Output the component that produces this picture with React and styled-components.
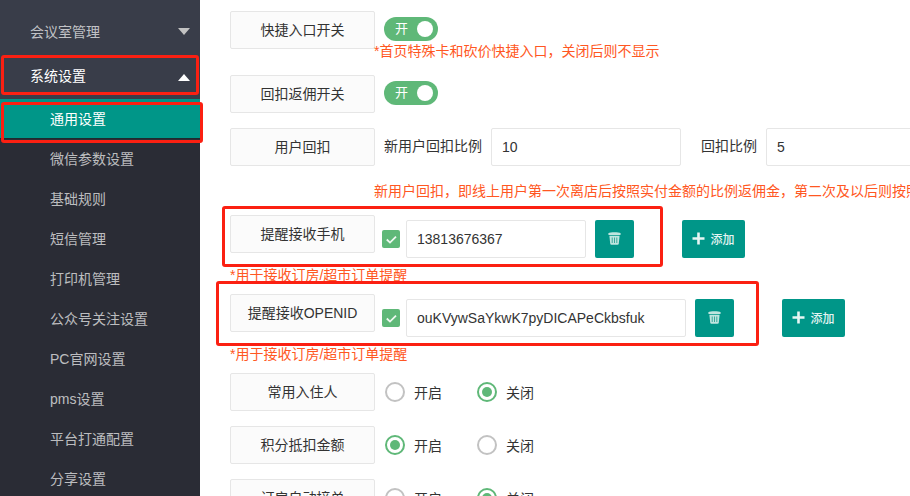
import React from 'react';
import styled, { createGlobalStyle } from 'styled-components';

const Global = createGlobalStyle`
  html, body { margin: 0; padding: 0; height: 496px; overflow: hidden; background: #fff; }
  body { font-family: "Liberation Sans", "Noto Sans CJK SC", sans-serif; font-size: 14px; color: #333; }
`;
const Page = styled.div`display: flex; width: 910px; height: 496px; overflow: hidden; position: relative;`;
const Sidebar = styled.nav`width: 200px; flex: none; background: #393d49; padding-top: 9px; box-sizing: border-box;`;
const TopItem = styled.div`
  height: 45px; display: flex; align-items: center; justify-content: space-between;
  padding: 0 10px 0 30px; color: ${p => (p.$open ? '#fff' : 'rgba(255,255,255,.7)')};
`;
const TopText = styled.span`margin-bottom: ${p => (p.$open ? 3 : 2)}px;`;
const Arrow = styled.span`
  width: 0; height: 0; border-left: 6px solid transparent; border-right: 6px solid transparent;
  ${p => (p.$up ? 'border-bottom: 7px solid #fff; margin-top: 1px;' : 'border-top: 7px solid #c2c2c2;')}
`;
const SubList = styled.div`background: #2a2c35; height: 397px;`;
const SubItem = styled.div`
  height: 40px; line-height: 40px; padding-left: 50px; box-sizing: border-box;
  color: ${p => (p.$active ? '#fff' : 'rgba(255,255,255,.7)')};
  background: ${p => (p.$active ? '#009688' : 'transparent')};
  ${p => p.$active && 'border-bottom: 1px solid #1f2a2e;'}
`;
const Main = styled.main`flex: 1; min-width: 0; padding: 11px 0 0 30px; display: flex; flex-direction: column;`;
const Row = styled.div`display: flex; align-items: flex-start; height: 38px; flex: none; margin-bottom: ${p => p.$mb || 0}px;`;
const Label = styled.div`
  width: 145px; height: 38px; flex: none; box-sizing: border-box; display: flex; align-items: center; justify-content: center;
  background: #fbfbfb; border: 1px solid #e6e6e6; border-radius: 2px; color: #333; padding-bottom: 2px;
`;
const Toggle = styled.div`
  margin: 6px 0 0 9px; width: 54px; height: 24px; border-radius: 12px; background: #5fb878; color: #fff;
  font-size: 13px; display: flex; align-items: center; justify-content: space-between; padding: 0 5px 0 11px; box-sizing: border-box;
`;
const ToggleText = styled.span`margin-bottom: 3px;`;
const Knob = styled.span`width: 16px; height: 16px; border-radius: 50%; background: #fff;`;
const Hint = styled.div`
  color: #ff5722; line-height: 20px; height: 20px; white-space: nowrap; flex: none;
  margin: ${p => p.$mt}px 0 ${p => p.$mb}px ${p => p.$ml}px;
`;
const Text = styled.span`line-height: 36px; margin-left: ${p => p.$ml}px; flex: none; color: #333;`;
const Input = styled.div`
  width: ${p => p.$w}px; height: 38px; box-sizing: border-box; flex: none; border: 1px solid #e6e6e6; border-radius: 2px;
  background: #fff; color: #333; line-height: 36px; padding-left: 10px; margin-left: ${p => p.$ml}px;
  margin-top: ${p => p.$mt || 0}px; white-space: nowrap;
`;
const Check = styled.span`
  width: 18px; height: 18px; flex: none; margin: 15px 0 0 7px; background: #5fb878; border-radius: 2px;
  display: flex; align-items: center; justify-content: center;
`;
const TealBtn = styled.div`
  height: 38px; flex: none; margin-top: 5px; margin-left: ${p => p.$ml}px; width: ${p => p.$w}px;
  background: #009688; border-radius: 2px; color: #e4f4f2; font-size: 12px; font-weight: 500; padding-bottom: 1px; box-sizing: border-box;
  display: flex; align-items: center; justify-content: center; gap: 5px;
`;
const RadioWrap = styled.div`
  display: flex; align-items: center; height: 38px; flex: none; margin-left: ${p => p.$ml}px; gap: 9px; color: #333;
`;
const Circle = styled.span`
  width: 20px; height: 20px; box-sizing: border-box; border-radius: 50%;
  border: 2px solid ${p => (p.$on ? '#5fb878' : '#c2c2c2')}; display: flex; align-items: center; justify-content: center;
  &::after { content: ''; width: 10px; height: 10px; border-radius: 50%; background: ${p => (p.$on ? '#5fb878' : 'transparent')}; }
`;
const Mark = styled.div`
  position: absolute; box-sizing: border-box; border: 3px solid #fb2012; border-radius: 3px; pointer-events: none;
  left: ${p => p.$x}px; top: ${p => p.$y}px; width: ${p => p.$w}px; height: ${p => p.$h}px;
`;

const Trash = () => (
  <svg width="13" height="13" viewBox="0 0 13 13" fill="#bfe5df">
    <path d="M0.2 1.4 C2.5 0 10.5 0 12.8 1.4 L12.4 3 H0.6 Z" />
    <path d="M1.4 3.8 H11.6 L10.8 11.6 C10.7 12.4 10.3 12.8 9.6 12.8 H3.4 C2.7 12.8 2.3 12.4 2.2 11.6 Z" />
    <path d="M3.7 5.4 H4.7 V11 H3.7 Z M6 5.4 H7 V11 H6 Z M8.3 5.4 H9.3 V11 H8.3 Z" fill="#3aa99b" />
  </svg>
);
const Plus = () => (
  <svg width="13" height="13" viewBox="0 0 13 13" fill="#e8f6f4"><path d="M5.2 0.5 H7.8 V5.2 H12.5 V7.8 H7.8 V12.5 H5.2 V7.8 H0.5 V5.2 H5.2 Z" /></svg>
);
const Tick = () => (
  <svg width="13" height="13" viewBox="0 0 13 13" fill="none" stroke="#eef8f1" strokeWidth="1.8"><path d="M1.8 6.5 L5 9.6 L11 3.6" /></svg>
);
const Radio = ({ on, ml, children }) => (
  <RadioWrap $ml={ml}><Circle $on={on} /><span>{children}</span></RadioWrap>
);
const subs = ['微信参数设置', '基础规则', '短信管理', '打印机管理', '公众号关注设置', 'PC官网设置', 'pms设置', '平台打通配置', '分享设置'];

export default function App() {
  return (
    <Page>
      <Global />
      <Sidebar>
        <TopItem><TopText>会议室管理</TopText><Arrow /></TopItem>
        <TopItem $open><TopText $open>系统设置</TopText><Arrow $up /></TopItem>
        <SubList>
          <SubItem $active>通用设置</SubItem>
          {subs.map(s => <SubItem key={s}>{s}</SubItem>)}
        </SubList>
      </Sidebar>
      <Main>
        <Row><Label>快捷入口开关</Label><Toggle><ToggleText>开</ToggleText><Knob /></Toggle></Row>
        <Hint $mt={-8} $mb={14} $ml={144}>*首页特殊卡和砍价快捷入口，关闭后则不显示</Hint>
        <Row $mb={15}><Label>回扣返佣开关</Label><Toggle><ToggleText>开</ToggleText><Knob /></Toggle></Row>
        <Row>
          <Label>用户回扣</Label>
          <Text $ml={9}>新用户回扣比例</Text><Input $w={190} $ml={9}>10</Input>
          <Text $ml={20}>回扣比例</Text><Input $w={190} $ml={9}>5</Input>
        </Row>
        <Hint $mt={15} $mb={14} $ml={144}>新用户回扣，即线上用户第一次离店后按照实付金额的比例返佣金，第二次及以后则按照回扣比例返佣金</Hint>
        <Row>
          <Label>提醒接收手机</Label><Check><Tick /></Check>
          <Input $w={180} $ml={6} $mt={5}>13813676367</Input>
          <TealBtn $w={39} $ml={9}><Trash /></TealBtn>
          <TealBtn $w={63} $ml={48}><Plus />添加</TealBtn>
        </Row>
        <Hint $mt={12} $mb={9} $ml={0}>*用于接收订房/超市订单提醒</Hint>
        <Row>
          <Label>提醒接收OPENID</Label><Check><Tick /></Check>
          <Input $w={280} $ml={6} $mt={5}>ouKVywSaYkwK7pyDICAPeCkbsfuk</Input>
          <TealBtn $w={39} $ml={9}><Trash /></TealBtn>
          <TealBtn $w={63} $ml={48}><Plus />添加</TealBtn>
        </Row>
        <Hint $mt={12} $mb={9} $ml={0}>*用于接收订房/超市订单提醒</Hint>
        <Row $mb={15}><Label>常用入住人</Label><Radio ml={10}>开启</Radio><Radio ml={35} on>关闭</Radio></Row>
        <Row $mb={15}><Label>积分抵扣金额</Label><Radio ml={10} on>开启</Radio><Radio ml={35}>关闭</Radio></Row>
        <Row><Label>订房自动接单</Label><Radio ml={10}>开启</Radio><Radio ml={35} on>关闭</Radio></Row>
      </Main>
      <Mark $x={1} $y={55} $w={198} $h={40} />
      <Mark $x={1} $y={102} $w={202} $h={41} />
      <Mark $x={222} $y={206} $w={441} $h={61} />
      <Mark $x={216} $y={281} $w={543} $h={65} />
    </Page>
  );
}
